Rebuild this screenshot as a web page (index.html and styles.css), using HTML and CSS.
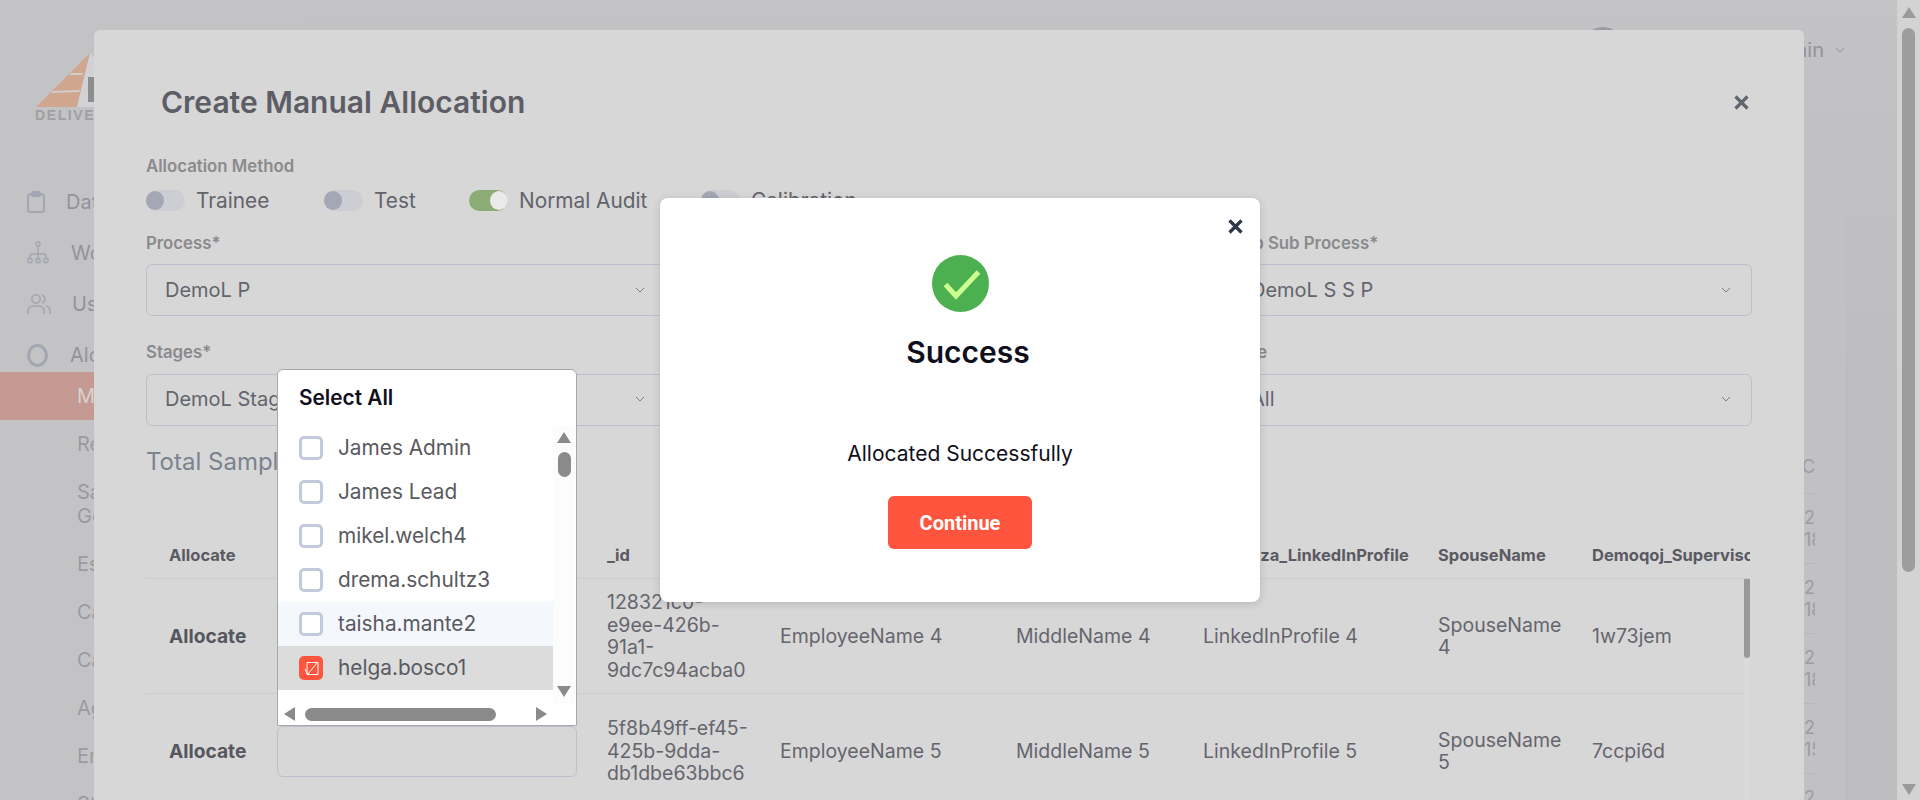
FILE: index.html
```html
<!DOCTYPE html>
<html lang="en">
<head>
<meta charset="utf-8">
<title>Create Manual Allocation</title>
<link rel="stylesheet" href="styles.css">
</head>
<body>
<div class="app">
  <aside class="sidebar">
    <div class="logo">
      <svg class="logo-mark" width="120" height="56" viewBox="0 0 120 56">
        <polygon points="1,54 55,0 42,54" fill="#d0a68e"/>
        <polygon points="55,0 110,54 42,54" fill="#d2d2d4"/>
        <polygon points="36,20 48,20 47,22 34,22" fill="#cfcfd0"/>
        <polygon points="18,38 45,37 44,39 16,40" fill="#cfcfd0"/>
        <rect x="53" y="24" width="14" height="25" fill="#8d8d8f"/>
      </svg>
      <div class="logo-text">DELIVERY</div>
    </div>
    <nav class="nav">
      <div class="nav-item nav-a">
        <svg width="18" height="22" viewBox="0 0 18 22" fill="none" stroke="#a3a6b0" stroke-width="2"><rect x="1" y="3" width="16" height="18" rx="2.5"/><rect x="5" y="1" width="8" height="4" rx="1"/></svg>
        <span class="nav-label nav-label-a">Data Upload</span>
      </div>
      <div class="nav-item nav-b">
        <svg width="22" height="24" viewBox="0 0 22 24" fill="none" stroke="#a3a6b0" stroke-width="1.4"><circle cx="11" cy="3" r="2"/><path d="M11 5v14M3 17v-1.5a2.5 2.5 0 0 1 2.5-2.5h11a2.5 2.5 0 0 1 2.5 2.5V17"/><circle cx="3" cy="19.5" r="2.2"/><circle cx="11" cy="19.5" r="2.2"/><circle cx="19" cy="19.5" r="2.2"/></svg>
        <span class="nav-label nav-label-b">Workflow</span>
      </div>
      <div class="nav-item nav-c">
        <svg width="24" height="22" viewBox="0 0 24 22" fill="none" stroke="#a3a6b0" stroke-width="1.6"><circle cx="9" cy="6" r="4.2"/><path d="M1 21v-3a5 5 0 0 1 5-5h6a5 5 0 0 1 5 5v3M15 2a4.2 4.2 0 0 1 0 8M19 13a5 5 0 0 1 4 5v3"/></svg>
        <span class="nav-label nav-label-c">Users</span>
      </div>
      <div class="nav-item nav-d">
        <svg width="21" height="23" viewBox="0 0 21 23" fill="none" stroke="#a3a6b0" stroke-width="3"><ellipse cx="10.5" cy="11.5" rx="9" ry="10"/></svg>
        <span class="nav-label nav-label-d">Alocation</span>
      </div>
      <div class="sub-item sub-active">Manual</div>
      <div class="sub-item sub-first">Reallocation</div>
      <div class="sub-item sub-two">Sample<br>Generation</div>
      <div class="sub-item">Escalation</div>
      <div class="sub-item">Calibration</div>
      <div class="sub-item">Calendar</div>
      <div class="sub-item">Agents</div>
      <div class="sub-item">Employees</div>
      <div class="sub-item">Stages</div>
    </nav>
  </aside>
  <main class="main">
    <header class="topbar">
      <span class="avatar"></span>
      <span class="user-name">James Admin</span>
      <svg class="user-chevron" width="12" height="8" viewBox="0 0 12 8" fill="none" stroke="#92929a" stroke-width="1"><path d="M2 2l4 4 4-4"/></svg>
    </header>
    <section class="card">
      <div class="bg-head">Created</div>
      <div class="bg-row">2024-01-12<br>18:20:45</div>
      <div class="bg-row">2024-01-12<br>18:20:45</div>
      <div class="bg-row">2024-01-12<br>18:20:45</div>
      <div class="bg-row">2024-01-12<br>15:20:45</div>
      <div class="bg-row">2024-01-12<br>15:20:45</div>
    </section>
  </main>
  <div class="page-scroll">
    <span class="tri tri-up page-up"></span>
    <span class="page-thumb"></span>
    <span class="tri tri-down page-down"></span>
  </div>
</div>

<div class="modal">
  <div class="modal-head">
    <h1 class="modal-title">Create Manual Allocation</h1>
    <svg class="modal-close" width="17" height="17" viewBox="0 0 17 17" fill="none" stroke="#62666f" stroke-width="3.2"><path d="M2.5 2.5l12 12M14.5 2.5l-12 12"/></svg>
  </div>
  <div class="label label-method">Allocation Method</div>
  <div class="toggles">
    <div class="toggle-wrap tw-1"><span class="toggle"></span><span class="toggle-text">Trainee</span></div>
    <div class="toggle-wrap tw-2"><span class="toggle"></span><span class="toggle-text">Test</span></div>
    <div class="toggle-wrap tw-3"><span class="toggle on"></span><span class="toggle-text">Normal Audit</span></div>
    <div class="toggle-wrap"><span class="toggle"></span><span class="toggle-text">Calibration</span></div>
  </div>
  <div class="field-grid first">
    <div class="label">Process*</div><div class="label">Sub Process*</div><div class="label">Sub Sub Process*</div>
    <div class="select">DemoL P<svg class="chev" width="12" height="8" viewBox="0 0 12 8" fill="none" stroke="#7d7f88"><path d="M2 2l4 4 4-4"/></svg></div>
    <div class="select">DemoL S P<svg class="chev" width="12" height="8" viewBox="0 0 12 8" fill="none" stroke="#7d7f88"><path d="M2 2l4 4 4-4"/></svg></div>
    <div class="select">DemoL S S P<svg class="chev" width="12" height="8" viewBox="0 0 12 8" fill="none" stroke="#7d7f88"><path d="M2 2l4 4 4-4"/></svg></div>
  </div>
  <div class="field-grid second">
    <div class="label">Stages*</div><div class="label">Assignee</div><div class="label">Role</div>
    <div class="select">DemoL Stage<svg class="chev" width="12" height="8" viewBox="0 0 12 8" fill="none" stroke="#7d7f88"><path d="M2 2l4 4 4-4"/></svg></div>
    <div class="select">All<svg class="chev" width="12" height="8" viewBox="0 0 12 8" fill="none" stroke="#7d7f88"><path d="M2 2l4 4 4-4"/></svg></div>
    <div class="select">All<svg class="chev" width="12" height="8" viewBox="0 0 12 8" fill="none" stroke="#7d7f88"><path d="M2 2l4 4 4-4"/></svg></div>
  </div>
  <div class="total">Total Samples: 6</div>
  <div class="table">
    <div class="tr th">
      <div>Allocate</div><div>Agents</div><div>_id</div><div>EmployeeName</div><div>MiddleName</div><div>Demoqza_LinkedInProfile</div><div>SpouseName</div><div>Demoqoj_Supervisor</div>
    </div>
    <div class="tr td">
      <div class="alloc">Allocate</div><div><span class="input"></span></div><div>128321c0-<br>e9ee-426b-<br>91a1-<br>9dc7c94acba0</div><div>EmployeeName 4</div><div>MiddleName 4</div><div>LinkedInProfile 4</div><div class="spouse">SpouseName 4</div><div>1w73jem</div>
    </div>
    <div class="tr td">
      <div class="alloc">Allocate</div><div><span class="input"></span></div><div>5f8b49ff-ef45-<br>425b-9dda-<br>db1dbe63bbc6</div><div>EmployeeName 5</div><div>MiddleName 5</div><div>LinkedInProfile 5</div><div class="spouse">SpouseName 5</div><div>7ccpi6d</div>
    </div>
    <span class="table-scroll"></span>
  </div>
</div>

<div class="dropdown">
  <div class="dd-head">Select All</div>
  <div class="dd-body">
    <ul class="dd-list">
      <li class="dd-item"><span class="cb"></span>James Admin</li>
      <li class="dd-item"><span class="cb"></span>James Lead</li>
      <li class="dd-item"><span class="cb"></span>mikel.welch4</li>
      <li class="dd-item"><span class="cb"></span>drema.schultz3</li>
      <li class="dd-item hover"><span class="cb"></span>taisha.mante2</li>
      <li class="dd-item selected"><span class="cb checked"><svg width="24" height="24" viewBox="0 0 24 24" fill="none" stroke="#fff" stroke-width="1"><path d="M8 6.5h11v12H8z"/><path d="M6 13l2.5 5.5L18 7"/></svg></span>helga.bosco1</li>
    </ul>
    <div class="dd-vscroll">
      <span class="tri tri-up"></span>
      <span class="dd-vthumb"></span>
      <span class="tri tri-down"></span>
    </div>
  </div>
  <div class="dd-hscroll">
    <span class="tri tri-left"></span>
    <span class="dd-hthumb"></span>
    <span class="tri tri-right"></span>
  </div>
</div>

<div class="dialog">
  <svg class="dialog-close" width="17" height="17" viewBox="0 0 17 17" fill="none" stroke="#2d3748" stroke-width="3.2"><path d="M2.5 2.5l12 12M14.5 2.5l-12 12"/></svg>
  <svg class="dialog-icon" width="57" height="57" viewBox="0 0 57 57"><circle cx="28.5" cy="28.5" r="28.5" fill="#4caf50"/><path d="M13.5 29.5L24 41 46.5 17" fill="none" stroke="#ccff90" stroke-width="5"/></svg>
  <h2 class="dialog-title">Success</h2>
  <p class="dialog-text">Allocated Successfully</p>
  <button class="dialog-btn">Continue</button>
</div>
</body>
</html>
```
FILE: styles.css
```css
* { box-sizing: border-box; }
html, body { margin: 0; padding: 0; height: 800px; overflow: hidden; }
body { font-family: Inter, "Liberation Sans", sans-serif; background: #c3c3c5; color: #5d5d65; }
h1, h2, p, ul { margin: 0; padding: 0; list-style: none; }

.app { display: flex; width: 1920px; height: 800px; overflow: hidden; }

/* Sidebar beneath the modal */
.sidebar { width: 300px; flex: none; padding-top: 53px; }
.logo { padding-left: 35px; height: 137px; }
.logo-mark { display: block; }
.logo-text { font: 700 14px "Liberation Sans", sans-serif; letter-spacing: 1.6px; color: #a0a0a2; line-height: 10px; margin-top: 1px; }
.nav { display: flex; flex-direction: column; }
.nav-item { display: flex; align-items: center; height: 24px; padding-left: 27px; font-size: 20px; color: #92939b; }
.nav-b, .nav-c, .nav-d { margin-top: 27px; }
.nav-label-a { margin-left: 21px; }
.nav-label-b { margin-left: 22px; }
.nav-label-c { margin-left: 21px; }
.nav-label-d { margin-left: 22px; }
.sub-item { padding-left: 77px; font-size: 20px; line-height: 24px; color: #9a9aa1; margin-top: 24px; white-space: nowrap; }
.sub-active { background: #c49a93; color: #d9d2d2; height: 48px; line-height: 48px; margin-top: 5px; }
.sub-first { margin-top: 12px; }

/* Main beneath the modal */
.main { flex: 1; display: flex; flex-direction: column; background: linear-gradient(#c3c3c5, #bdbdbf 400px); }
.topbar { flex: none; display: flex; align-items: center; height: 98px; width: 100%; justify-content: flex-end; padding-right: 51px; color: #92929a; font-size: 20px; }
.avatar { width: 44px; height: 44px; border-radius: 50%; background: #9a9aa3; margin-right: 71px; flex: none; }
.user-name { margin-right: 10px; padding-top: 2px; }
.user-chevron { margin-top: 2px; }
.card { flex: none; width: 93px; height: 653px; margin: 49px 52px 0 auto; padding-top: 307px; background: #c1c1c3; font-size: 18px; color: #9c9ca2; overflow: hidden; }
.bg-head { width: 63px; height: 39px; padding-left: 50px; line-height: 26px; white-space: nowrap; overflow: hidden; }
.bg-row { width: 63px; height: 70px; padding-top: 13px; padding-left: 52px; line-height: 22px; border-top: 1px solid #b8b8ba; white-space: nowrap; overflow: hidden; }

.page-scroll { width: 23px; flex: none; background: #d3d3d3; display: flex; flex-direction: column; align-items: center; }
.page-up { margin-top: 7px; }
.page-thumb { flex: none; width: 13px; height: 544px; margin-top: 10px; border-radius: 7px; background: #9d9d9d; }
.page-down { margin-top: 212px; }

.tri { display: block; width: 0; height: 0; flex: none; border-style: solid; border-color: transparent; }
.tri-up { border-width: 0 7px 11px; border-bottom-color: #9a9a9a; }
.tri-down { border-width: 11px 7px 0; border-top-color: #9a9a9a; }
.tri-left { border-width: 7px 11px 7px 0; border-right-color: #8a8a8a; }
.tri-right { border-width: 7px 0 7px 11px; border-left-color: #8a8a8a; }

/* Modal */
.modal { position: absolute; left: 94px; top: 30px; width: 1710px; height: 770px; padding: 0 54px 0 52px; background: #d7d7d7; border-radius: 6px 6px 0 0; overflow: hidden; }
.modal-head { display: flex; align-items: center; justify-content: space-between; height: 40px; margin-top: 52px; padding: 0 0 0 15px; }
.modal-title { font-size: 30px; font-weight: 600; line-height: 40px; color: #5d5d65; }
.label { font-size: 16.8px; font-weight: 600; line-height: 20px; color: #8a8a8d; white-space: nowrap; }
.label-method { margin-top: 34px; }
.toggles { display: flex; margin-top: 14px; height: 21px; }
.toggle-wrap { display: flex; align-items: center; width: 178px; }
.tw-1 { width: 178px; }
.tw-2 { width: 145px; }
.tw-3 { width: 232px; }
.toggle { position: relative; display: block; width: 39px; height: 21px; border-radius: 11px; background: #cdced3; margin-right: 11px; flex: none; }
.toggle::after { content: ""; position: absolute; left: 0; top: 1px; width: 18px; height: 19px; border-radius: 50%; background: #a4a8b5; }
.toggle.on { background: #8bad75; }
.toggle.on::after { left: 21px; background: #eaeaea; }
.toggle-text { font-size: 20.8px; color: #62636b; white-space: nowrap; }
.field-grid { display: grid; grid-template-columns: repeat(3, 519.5px); column-gap: 23.5px; row-gap: 11px; width: 1605px; }
.first { margin-top: 22px; }
.second { margin-top: 26px; row-gap: 12px; }
.select { display: flex; align-items: center; justify-content: space-between; height: 52px; padding: 0 19px 0 18px; border: 1px solid #bcc0cc; border-radius: 6px; font-size: 20px; color: #63646c; }
.second .select { height: 51.5px; padding-bottom: 1px; }
.total { margin-top: 21.5px; font-size: 24px; line-height: 30px; color: #7b8290; }

.table { position: relative; margin-top: 54px; width: 1604px; overflow: hidden; }
.tr { display: grid; grid-template-columns: 108px 330px 173px 236px 187px 235px 154px 181px; width: 1604px; border-bottom: 1px solid #cdcdcd; }
.tr > div { padding-left: 23px; }
.th { height: 48px; align-items: center; font-size: 16.5px; font-weight: 700; color: #5a5a62; white-space: nowrap; }
.td { height: 115px; align-items: center; font-size: 19.5px; line-height: 22.5px; color: #65656d; }
.tr.td > .spouse { padding-right: 8px; }
.tr.td > .alloc { font-size: 19.2px; font-weight: 700; color: #56565e; white-space: nowrap; }
.input { display: block; width: 300px; height: 51px; border: 1px solid #bcc0cc; border-radius: 6px; }
.table-scroll { position: absolute; right: 0; top: 48px; bottom: 0; width: 6px; background: #dadada; }
.table-scroll::before { content: ""; display: block; height: 79px; background: #999; border-radius: 0 0 3px 3px; }

/* Dropdown */
.dropdown { position: absolute; left: 277px; top: 369px; width: 300px; height: 357px; background: #fff; border: 1px solid #a8a8a8; border-radius: 6px 6px 0 0; display: flex; flex-direction: column; }
.dd-head { height: 56px; padding: 15px 0 0 21px; font-size: 20.8px; font-weight: 600; line-height: 25px; color: #10101c; }
.dd-body { display: flex; height: 277px; }
.dd-list { width: 275px; flex: none; }
.dd-item { display: flex; align-items: center; height: 44px; padding: 0 0 2px 21px; font-size: 20.8px; color: #595960; white-space: nowrap; }
.dd-item.hover { background: #f4f8fd; }
.dd-item.selected { background: #dcdcdc; }
.cb { display: block; width: 24px; height: 24px; margin: 2px 15px 0 0; border: 3px solid #c1cbdc; border-radius: 5px; background: #fff; flex: none; }
.cb.checked { border: 0; background: #ff553e; }
.cb svg { display: block; }
.dd-vscroll { width: 22px; background: #fcfcfc; display: flex; flex-direction: column; align-items: center; }
.dd-vscroll .tri-up { margin-top: 6px; border-bottom-color: #8a8a8a; }
.dd-vscroll .tri-down { margin-top: 209px; border-top-color: #8a8a8a; }
.dd-vthumb { width: 13px; height: 25px; margin-top: 9px; border-radius: 7px; background: #8a8a8a; }
.dd-hscroll { position: relative; flex: 1; display: flex; align-items: center; padding-left: 6px; }
.dd-hscroll .tri-right { margin-left: 40px; }
.dd-hthumb { width: 191px; height: 13px; margin-left: 10px; border-radius: 7px; background: #8a8a8a; }

/* Success dialog */
.dialog { position: absolute; left: 660px; top: 198px; width: 600px; height: 404px; background: #fff; border-radius: 8px; box-shadow: 0 2px 8px rgba(0,0,0,.15); display: flex; flex-direction: column; align-items: center; }
.dialog-close { position: absolute; right: 16px; top: 20px; }
.dialog-icon { display: block; margin-top: 57px; }
.dialog-title { margin-top: 20px; padding-left: 16px; font-size: 30px; font-weight: 600; line-height: 40px; color: #10101c; }
.dialog-text { margin-top: 69px; font-size: 21px; line-height: 26px; color: #10101c; }
.dialog-btn { display: block; width: 144px; height: 53px; margin-top: 29px; border: 0; border-radius: 6px; background: #ff553e; color: #fff; font: 700 20px Roboto, sans-serif; }
```
